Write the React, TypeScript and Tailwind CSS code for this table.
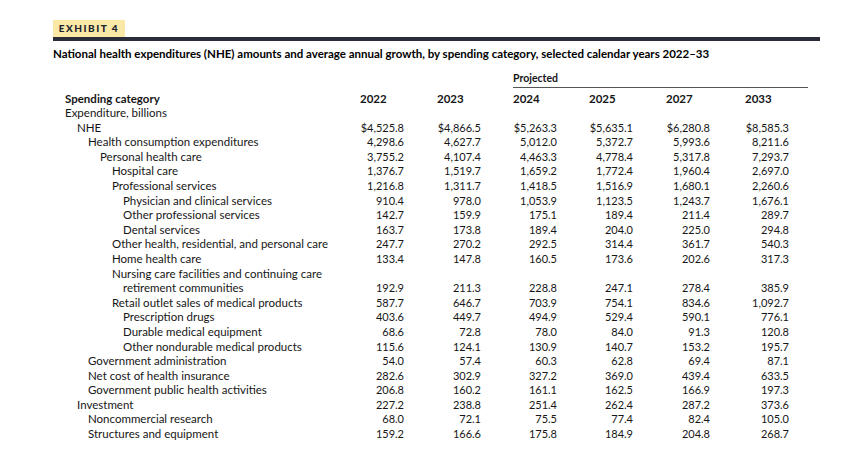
import React from 'react';

type Row = { label: string; level: number; values?: string[] };

const YEARS = ['2022', '2023', '2024', '2025', '2027', '2033'];

const ROWS: Row[] = [
  { label: 'Expenditure, billions', level: 0 },
  { label: 'NHE', level: 1, values: ['$4,525.8', '$4,866.5', '$5,263.3', '$5,635.1', '$6,280.8', '$8,585.3'] },
  { label: 'Health consumption expenditures', level: 2, values: ['4,298.6', '4,627.7', '5,012.0', '5,372.7', '5,993.6', '8,211.6'] },
  { label: 'Personal health care', level: 3, values: ['3,755.2', '4,107.4', '4,463.3', '4,778.4', '5,317.8', '7,293.7'] },
  { label: 'Hospital care', level: 4, values: ['1,376.7', '1,519.7', '1,659.2', '1,772.4', '1,960.4', '2,697.0'] },
  { label: 'Professional services', level: 4, values: ['1,216.8', '1,311.7', '1,418.5', '1,516.9', '1,680.1', '2,260.6'] },
  { label: 'Physician and clinical services', level: 5, values: ['910.4', '978.0', '1,053.9', '1,123.5', '1,243.7', '1,676.1'] },
  { label: 'Other professional services', level: 5, values: ['142.7', '159.9', '175.1', '189.4', '211.4', '289.7'] },
  { label: 'Dental services', level: 5, values: ['163.7', '173.8', '189.4', '204.0', '225.0', '294.8'] },
  { label: 'Other health, residential, and personal care', level: 4, values: ['247.7', '270.2', '292.5', '314.4', '361.7', '540.3'] },
  { label: 'Home health care', level: 4, values: ['133.4', '147.8', '160.5', '173.6', '202.6', '317.3'] },
  { label: 'Nursing care facilities and continuing care', level: 4 },
  { label: 'retirement communities', level: 5, values: ['192.9', '211.3', '228.8', '247.1', '278.4', '385.9'] },
  { label: 'Retail outlet sales of medical products', level: 4, values: ['587.7', '646.7', '703.9', '754.1', '834.6', '1,092.7'] },
  { label: 'Prescription drugs', level: 5, values: ['403.6', '449.7', '494.9', '529.4', '590.1', '776.1'] },
  { label: 'Durable medical equipment', level: 5, values: ['68.6', '72.8', '78.0', '84.0', '91.3', '120.8'] },
  { label: 'Other nondurable medical products', level: 5, values: ['115.6', '124.1', '130.9', '140.7', '153.2', '195.7'] },
  { label: 'Government administration', level: 2, values: ['54.0', '57.4', '60.3', '62.8', '69.4', '87.1'] },
  { label: 'Net cost of health insurance', level: 2, values: ['282.6', '302.9', '327.2', '369.0', '439.4', '633.5'] },
  { label: 'Government public health activities', level: 2, values: ['206.8', '160.2', '161.1', '162.5', '166.9', '197.3'] },
  { label: 'Investment', level: 1, values: ['227.2', '238.8', '251.4', '262.4', '287.2', '373.6'] },
  { label: 'Noncommercial research', level: 2, values: ['68.0', '72.1', '75.5', '77.4', '82.4', '105.0'] },
  { label: 'Structures and equipment', level: 2, values: ['159.2', '166.6', '175.8', '184.9', '204.8', '268.7'] },
];

const INDENT = ['pl-[12px]', 'pl-[24px]', 'pl-[35px]', 'pl-[47px]', 'pl-[59px]', 'pl-[70px]'];

export default function App() {
  return (
    <div className="w-[864px] h-[462px] bg-white pl-[53px] pt-[20px] text-[#161616] font-['Lato',sans-serif]">
      <div className="w-[767px]">
        {/* exhibit label + heavy rule */}
        <div className="h-[17px] w-[72px] bg-[#f9e8a6] flex items-center justify-center text-[10px] font-black tracking-[1.5px] text-[#20222f]">
          EXHIBIT 4
        </div>
        <div className="h-[4px] bg-[#2a2c39]" />
        <h1 className="mt-[6px] text-[11.5px] leading-[14px] font-bold text-black whitespace-nowrap">
          National health expenditures (NHE) amounts and average annual growth, by spending category, selected calendar years 2022–33
        </h1>

        <div className="mt-[10px] grid grid-cols-[307px_77px_76px_76px_77px_79px_63px] text-[11px]">
          {/* projected header over 2024–2033 */}
          <div className="col-start-4 col-span-4 leading-[14px] pb-[2px] border-b-[1.5px] border-[#555] font-bold text-[10.5px]">
            Projected
          </div>

          {/* column heads */}
          <div className="col-start-1 mt-[4px] pl-[12px] leading-[14px] font-bold text-[11.5px]">Spending category</div>
          {YEARS.map((y) => (
            <div key={y} className="mt-[4px] leading-[14px] font-bold text-[11.5px]">{y}</div>
          ))}

          {ROWS.map((r, i) => (
            <React.Fragment key={i}>
              <div className={`col-start-1 h-[14.6px] leading-[14.6px] text-[11.5px] whitespace-nowrap ${INDENT[r.level]}`}>{r.label}</div>
              {r.values ? (
                r.values.map((v, j) => (
                  <div key={j} className="h-[14.6px] leading-[14.6px]">
                    <div className="w-[44px] text-right whitespace-nowrap">{v}</div>
                  </div>
                ))
              ) : (
                <div className="col-span-6 h-[14.6px]" />
              )}
            </React.Fragment>
          ))}
        </div>
      </div>
    </div>
  );
}
